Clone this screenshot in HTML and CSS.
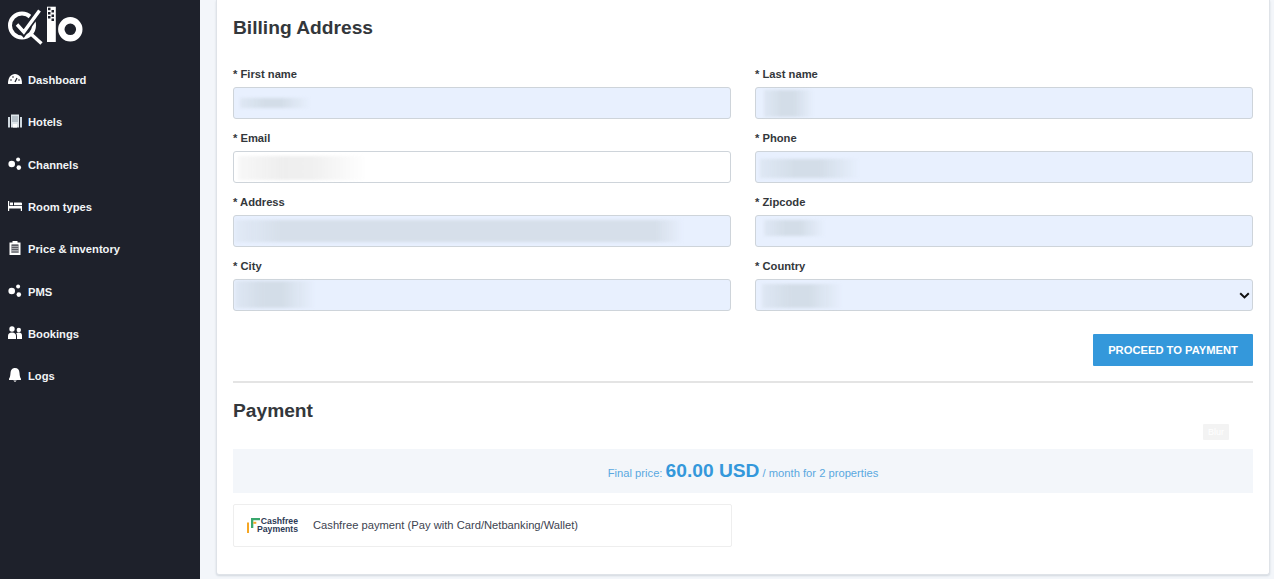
FILE: index.html
```html
<!DOCTYPE html>
<html lang="en">
<head>
<meta charset="utf-8">
<title>Billing</title>
<link rel="stylesheet" href="styles.css">
</head>
<body>
<div class="app">
  <aside class="sidebar">
    <div class="logo">
      <svg width="90" height="50" viewBox="0 0 90 50">
        <circle cx="22" cy="25.500" r="12" fill="none" stroke="#fff" stroke-width="4"/>
        <path d="M31.500 34.500l10 9" stroke="#fff" stroke-width="3.400" fill="none"/>
        <path d="M16.500 24l7 8L40 9" stroke="#1e212b" stroke-width="7.500" fill="none"/>
        <path d="M17 24.500l6.800 7.500L39.500 10.500" stroke="#fff" stroke-width="3.400" fill="none"/>
        <rect x="47" y="6.700" width="8.800" height="35.300" fill="#fff"/>
        <rect x="48" y="7.700" width="2.500" height="2.500" fill="#1e212b"/>
        <rect x="48" y="12" width="2.500" height="2.500" fill="#1e212b"/>
        <rect x="51.500" y="10" width="2.500" height="2.500" fill="#1e212b"/>
        <rect x="48" y="16" width="2.500" height="2.500" fill="#1e212b"/>
        <rect x="51.500" y="14.500" width="2.500" height="2.500" fill="#1e212b"/>
        <rect x="51.500" y="18.500" width="2.500" height="2.500" fill="#1e212b"/>
        <circle cx="70.300" cy="29.300" r="9" fill="none" stroke="#fff" stroke-width="6.400"/>
      </svg>
    </div>
    <nav class="nav">
      <a class="nav-item"><svg class="ico" viewBox="0 0 14 14"><path d="M0 11.500C0 5.500 3 2 7 2s7 3.500 7 9.500q0 .5-1 .5H1q-1 0-1-.5z" fill="#fff"/><path d="M7 10l2-4" stroke="#1e212b" stroke-width="1.300"/><circle cx="3" cy="8" r=".8" fill="#1e212b"/><circle cx="5" cy="5" r=".8" fill="#1e212b"/><circle cx="11" cy="8" r=".8" fill="#1e212b"/></svg>Dashboard</a>
      <a class="nav-item"><svg class="ico" viewBox="0 0 14 14"><path d="M0 3h2v10.500H0zM12 3h2v10.500h-2z" fill="#cfd8de"/><path d="M3 .5h8v13H3z" fill="#dde4e9"/><path d="M5 10h4v3.500H5z" fill="#fff"/><path d="M4 3h6M4 5h6M4 7h6" stroke="#7d8c98" stroke-width=".8"/></svg>Hotels</a>
      <a class="nav-item"><svg class="ico" viewBox="0 0 14 14"><circle cx="3.700" cy="7" r="3.300" fill="#fff"/><circle cx="10.100" cy="2.400" r="2" fill="#fff"/><circle cx="10.800" cy="10.600" r="2.300" fill="#fff"/></svg>Channels</a>
      <a class="nav-item"><svg class="ico" viewBox="0 0 14 14"><path d="M0 2h1.200v5H14v5h-1.200v-2.500H1.200V12H0z" fill="#fff"/><path d="M2 3.500h3v2.800H2zM6 3.500h7q1 0 1 1v1.800H6z" fill="#fff"/></svg>Room types</a>
      <a class="nav-item"><svg class="ico" viewBox="0 0 14 14"><path d="M1.500 1.500h3V0h5v1.500h3V14h-11z" fill="#fff"/><path d="M3.500 3.500h7v8.500h-7z" fill="#1e212b"/><path d="M3.500 5.200h7M3.500 7.200h7M3.500 9.200h7M3.500 11h7" stroke="#fff" stroke-width=".9"/></svg>Price &amp; inventory</a>
      <a class="nav-item"><svg class="ico" viewBox="0 0 14 14"><circle cx="3.700" cy="7" r="3.300" fill="#fff"/><circle cx="10.100" cy="2.400" r="2" fill="#fff"/><circle cx="10.800" cy="10.600" r="2.300" fill="#fff"/></svg>PMS</a>
      <a class="nav-item"><svg class="ico" viewBox="0 0 14 14"><circle cx="4" cy="3" r="2.700" fill="#fff"/><circle cx="10.800" cy="4" r="2.200" fill="#fff"/><path d="M0 13v-3q0-3.500 4-3.500T8 10v3zM9 13v-3q0-1.800-.8-2.800 1-.8 2.600-.8 3.200 0 3.200 3.200V13z" fill="#fff"/></svg>Bookings</a>
      <a class="nav-item"><svg class="ico" viewBox="0 0 14 14"><path d="M7 0q4.200 0 4.500 5c.2 3 .6 4.500 1.500 5.700v1.300H1v-1.300C1.900 9.500 2.300 8 2.500 5 2.800 1 5 0 7 0z" fill="#fff"/><path d="M5.200 12.500h3.600L7 14z" fill="#fff"/></svg>Logs</a>
    </nav>
  </aside>
  <main class="main">
    <section class="card">
      <h2 class="title">Billing Address</h2>
      <form class="form">
        <div class="field"><label>* First name</label><div class="box"><input class="input auto"><span class="blur b-first"></span></div></div>
        <div class="field"><label>* Last name</label><div class="box"><input class="input auto"><span class="blur b-last"></span></div></div>
        <div class="field"><label>* Email</label><div class="box"><input class="input"><span class="blur grey b-email"></span></div></div>
        <div class="field"><label>* Phone</label><div class="box"><input class="input auto"><span class="blur b-phone"></span></div></div>
        <div class="field"><label>* Address</label><div class="box"><input class="input auto"><span class="blur b-address"></span></div></div>
        <div class="field"><label>* Zipcode</label><div class="box"><input class="input auto"><span class="blur b-zip"></span></div></div>
        <div class="field"><label>* City</label><div class="box"><input class="input auto"><span class="blur b-city"></span></div></div>
        <div class="field"><label>* Country</label><div class="box"><div class="input auto select"><svg width="11" height="7" viewBox="0 0 11 7"><path d="M1.200 1.200l4.300 4.200 4.300-4.200" fill="none" stroke="#111" stroke-width="2"/></svg></div><span class="blur b-country"></span></div></div>
      </form>
      <div class="actions"><button class="btn" type="button">PROCEED TO PAYMENT</button></div>
      <hr class="rule">
      <h2 class="title pay">Payment</h2>
      <div class="tagrow"><span class="tag">Blur</span></div>
      <div class="price">Final price: <strong>60.00 USD</strong> / month for 2 properties</div>
      <div class="method">
        <div class="cf">
          <svg class="cf-mark" width="13" height="15" viewBox="0 0 13 15"><path d="M0 4.500h2V15H0z" fill="#f5a623"/><path d="M4 10V0h9v2.200H6.300V10z" fill="#3aa76d"/><path d="M6.300 3.800h3v2h-3z" fill="#f5a623"/></svg>
          <span class="cf-text">Cashfree<br>Payments</span>
        </div>
        <span class="method-text">Cashfree payment (Pay with Card/Netbanking/Wallet)</span>
      </div>
    </section>
  </main>
</div>
</body>
</html>
```
FILE: styles.css
```css
* { box-sizing: border-box; }
html, body { margin: 0; height: 100%; overflow: hidden; }
body { font-family: "Liberation Sans", Arial, sans-serif; background: #f3f6fa; color: #2f3337; }
.app { display: flex; height: 579px; }
.sidebar { width: 200px; flex: none; background: #1e212b; }
.logo { height: 59px; }
.logo svg { display: block; }
.nav { display: flex; flex-direction: column; }
.nav-item { height: 42.3px; display: flex; align-items: center; padding-left: 7.500px; color: #f2f5f7; font-size: 11.2px; font-weight: 700; }
.ico { width: 14px; height: 14px; margin-right: 6.500px; flex: none; position: relative; top: -1px; }
.main { flex: 1; padding: 0 4px 4px 16px; min-width: 0; }
.card { height: 575px; background: #fff; border: 1px solid #dfe3e8; border-top: 0; border-radius: 0 0 3px 3px; padding: 0 16px; box-shadow: 0 1px 2px rgba(60,80,100,.18); }
.title { margin: 0; padding-top: 17px; height: 59px; font-size: 19.2px; line-height: 22px; font-weight: 700; color: #33373b; }
.form { display: grid; grid-template-columns: 498px 498px; column-gap: 24px; row-gap: 0; }
.field { height: 64px; }
.field label { display: block; height: 28px; padding-top: 8px; font-size: 11.2px; line-height: 14px; font-weight: 700; color: #33373b; }
.box { position: relative; height: 32px; }
.input { display: block; width: 100%; height: 32px; border: 1px solid #ced4da; border-radius: 3px; background: #fff; padding: 0; outline: 0; }
.input.auto { background: #e8f0fe; }
.select { display: flex; align-items: center; justify-content: flex-end; padding-right: 2px; }
.blur { position: absolute; display: block; background: linear-gradient(90deg, rgba(211,221,232,.45), #d3dde8 35%, #d3dde8 60%, rgba(211,221,232,0)); filter: blur(1.500px); }
.blur.grey { background: linear-gradient(90deg, rgba(240,240,240,.5), #eee 35%, #f0f0f0 60%, rgba(240,240,240,0)); }
.b-first { left: 7px; top: 11px; width: 70px; height: 10px; }
.b-last { left: 9px; top: 3px; width: 50px; height: 27px; }
.b-email { left: 5px; top: 5px; width: 127px; height: 24px; }
.b-phone { left: 5px; top: 8px; width: 100px; height: 19px; }
.b-address { left: 2px; top: 5px; width: 448px; height: 22px; background: linear-gradient(90deg, rgba(211,221,232,.3), #d6dfea 10%, #d6dfea 94%, rgba(211,221,232,0)); }
.b-zip { left: 9px; top: 5px; width: 61px; height: 16px; }
.b-city { left: 2px; top: 2px; width: 80px; height: 27px; }
.b-country { left: 7px; top: 5px; width: 80px; height: 24px; }
.actions { display: flex; justify-content: flex-end; padding-top: 19px; }
.btn { width: 160px; height: 32px; border: 0; border-radius: 1px; background: #3498db; color: #fff; font: 700 11.2px "Liberation Sans", Arial, sans-serif; padding: 0 0 1px; }
.rule { margin: 15px 0 0; height: 2px; border: 0; background: #e4e4e4; }
.title.pay { padding-top: 17px; height: 41px; }
.tagrow { display: flex; justify-content: flex-end; height: 25px; padding-right: 24px; }
.tag { width: 26px; height: 16px; background: #f3f3f3; color: #fff; font-size: 9px; line-height: 16px; text-align: center; border-radius: 1px; }
.price { height: 44px; background: #f3f6fa; color: #5aa8e0; font-size: 11.2px; line-height: 43px; text-align: center; }
.price strong { color: #3498db; font-size: 19.2px; }
.method { margin-top: 11px; width: 499px; height: 43px; border: 1px solid #eee; border-radius: 2px; display: flex; align-items: center; padding: 0 0 1px 13px; }
.cf { display: flex; align-items: center; justify-content: flex-end; width: 66px; padding-right: 15px; flex: none; }
.cf-mark { margin-right: -3px; flex: none; }
.cf-text { font-size: 8.7px; line-height: 8px; font-weight: 700; color: #2d3a55; text-align: right; }
.method-text { font-size: 11.2px; color: #3c4350; }
```
